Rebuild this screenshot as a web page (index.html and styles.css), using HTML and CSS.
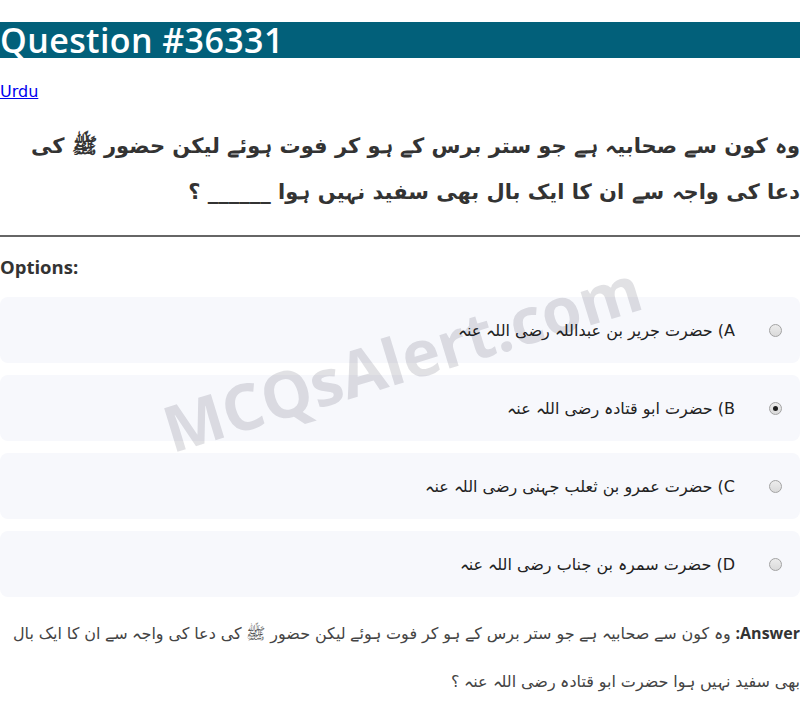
FILE: index.html
```html
<!DOCTYPE html>
<html lang="ur">
<head>
<meta charset="utf-8">
<title>Question #36331</title>
<link rel="stylesheet" href="styles.css">
</head>
<body>
<h1 class="title">Question #36331</h1>
<p class="lang"><a href="#" class="lang-link">Urdu</a></p>
<p class="question" dir="rtl">وہ کون سے صحابیہ ہے جو ستر برس کے ہو کر فوت ہوئے لیکن حضور ﷺ کی دعا کی واجہ سے ان کا ایک بال بھی سفید نہیں ہوا ______ ؟</p>
<hr class="divider">
<h3 class="options-title">Options:</h3>
<div class="options" dir="rtl">
  <label class="option"><input class="radio" type="radio" name="opt" disabled><span class="option-text">A) حضرت جریر بن عبداللہ رضی اللہ عنہ</span></label>
  <label class="option"><input class="radio" type="radio" name="opt" disabled checked><span class="option-text">B) حضرت ابو قتادہ رضی اللہ عنہ</span></label>
  <label class="option"><input class="radio" type="radio" name="opt" disabled><span class="option-text">C) حضرت عمرو بن ثعلب جہنی رضی اللہ عنہ</span></label>
  <label class="option"><input class="radio" type="radio" name="opt" disabled><span class="option-text">D) حضرت سمرہ بن جناب رضی اللہ عنہ</span></label>
</div>
<p class="answer" dir="rtl"><strong class="answer-label">Answer:</strong> وہ کون سے صحابیہ ہے جو ستر برس کے ہو کر فوت ہوئے لیکن حضور ﷺ کی دعا کی واجہ سے ان کا ایک بال بھی سفید نہیں ہوا حضرت ابو قتادہ رضی اللہ عنہ ؟</p>
<div class="watermark">MCQsAlert.com</div>
</body>
</html>
```
FILE: styles.css
```css
html, body {
  margin: 0;
  padding: 0;
  background: #ffffff;
}
body {
  font-family: "DejaVu Sans", sans-serif;
  font-size: 16px;
  color: #222;
  position: relative;
  overflow: hidden;
  height: 705px;
}
.title {
  margin: 22px 0 0;
  background: #02607a;
  color: #ffffff;
  font-family: "Open Sans", "DejaVu Sans", sans-serif;
  font-weight: 600;
  font-size: 34px;
  letter-spacing: 0.4px;
  line-height: 36px;
  height: 36px;
}
.lang {
  margin: 24px 0 0;
  line-height: 20px;
}
.lang-link {
  color: #0000ee;
  text-decoration: underline;
}
.question {
  margin: 21px 0 0;
  font-family: "DejaVu Sans", sans-serif;
  font-weight: bold;
  font-size: 21px;
  line-height: 46px;
  color: #333;
  text-align: right;
}
.divider {
  margin: 20px 0 0;
  border: none;
  border-top: 2px solid #666;
  height: 0;
}
.options-title {
  margin: 18px 0 0;
  font-family: "Open Sans", "DejaVu Sans", sans-serif;
  font-weight: bold;
  font-size: 18.5px;
  line-height: 24px;
  color: #333;
}
.options {
  margin-top: 18px;
  display: flex;
  flex-direction: column;
  gap: 12px;
}
.option {
  display: flex;
  align-items: center;
  height: 66px;
  padding: 0 18px;
  background: #f7f8fc;
  border-radius: 8px;
}
.radio {
  appearance: none;
  -webkit-appearance: none;
  margin: 0;
  width: 13px;
  height: 13px;
  box-sizing: border-box;
  border: 1px solid #a3a3a3;
  border-radius: 50%;
  background: linear-gradient(#ececec, #dadada);
  display: grid;
  place-items: center;
}
.radio:checked::before {
  content: "";
  width: 5px;
  height: 5px;
  border-radius: 50%;
  background: #1e1e1e;
}
.option-text {
  margin-right: 34px;
  font-size: 16px;
  color: #222;
}
.answer {
  margin: 12px 0 0;
  font-family: "Open Sans", "DejaVu Sans", sans-serif;
  font-size: 16px;
  word-spacing: 0.7px;
  line-height: 48px;
  color: #444;
  text-align: right;
}
.answer-label {
  color: #333;
  font-weight: bold;
}
.watermark {
  position: absolute;
  left: 402px;
  top: 358px;
  transform: translate(-50%, -50%) rotate(-17deg);
  font-family: "Open Sans", sans-serif;
  font-weight: bold;
  font-size: 64px;
  line-height: 1;
  color: rgba(10, 10, 30, 0.12);
  white-space: nowrap;
  pointer-events: none;
}
```
